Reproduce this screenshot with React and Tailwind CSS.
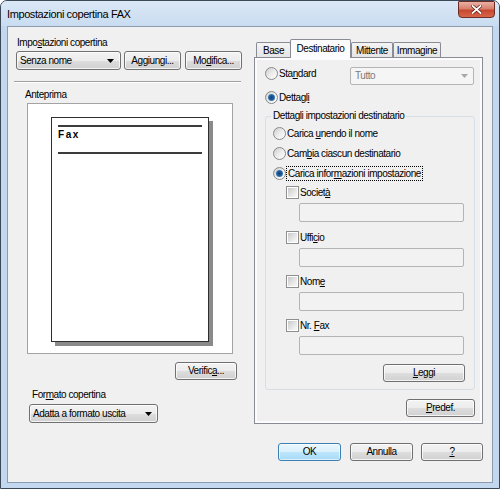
import React from "react";

const U = ({ children }) => (
  <span className="underline decoration-[1px] underline-offset-[1px]">{children}</span>
);

const T = "text-[10px] leading-[12px] tracking-[-0.45px] text-black whitespace-nowrap";

const BTN =
  "flex items-center justify-center rounded-[3px] border border-[#707070] bg-[linear-gradient(to_bottom,#f3f3f3_0%,#ececec_50%,#dedede_50%,#d0d0d0_100%)] shadow-[inset_0_0_0_1px_rgba(255,255,255,0.75)]";
const BTN_DEF =
  "flex items-center justify-center rounded-[3px] border border-[#3c7fb1] bg-[linear-gradient(to_bottom,#eaf6fd_0%,#d9f0fc_50%,#bee6fd_50%,#a7d9f5_100%)] shadow-[inset_0_0_0_1px_rgba(255,255,255,0.6)]";

function Arrow({ color = "#000" }) {
  return (
    <svg width="7" height="4" viewBox="0 0 7 4">
      <polygon points="0,0 7,0 3.5,4" fill={color} />
    </svg>
  );
}

function Radio({ on }) {
  return (
    <div className="w-[13px] h-[13px] shrink-0 rounded-full border border-[#8a8a8a] bg-[linear-gradient(135deg,#cdcdcd_0%,#ececec_50%,#ffffff_100%)] flex items-center justify-center">
      {on && (
        <div className="w-[7px] h-[7px] rounded-full bg-[radial-gradient(circle_at_50%_50%,#123f73_0%,#2765a3_55%,#86bde6_100%)]" />
      )}
    </div>
  );
}

function Check() {
  return (
    <div className="w-[13px] h-[13px] shrink-0 border border-[#8e8f8f] bg-white p-[1px]">
      <div className="w-full h-full bg-[linear-gradient(135deg,#c9c9c9_0%,#e8e8e8_60%,#f8f8f8_100%)]" />
    </div>
  );
}

function TextBox() {
  return (
    <div className="ml-[33px] w-[165px] h-[19px] rounded-[2px] border border-[#b4b4b4] bg-[#f2f2f2]" />
  );
}

export default function App() {
  return (
    <div className="w-[500px] h-[489px] bg-white font-['Liberation_Sans',Arial,sans-serif]">
      <div className="w-[500px] h-[489px] flex flex-col border border-[#3a4858] rounded-t-[7px] bg-[#c3d8ee] overflow-hidden">
        {/* Title bar */}
        <div className="h-[25px] shrink-0 flex items-start justify-between bg-[linear-gradient(to_bottom,#dbe8f6,#c9dcf0)]">
          <div className="pl-[6px] pt-[6px] text-[11px] leading-[14px] tracking-[-0.4px] text-black whitespace-nowrap">
            Impostazioni copertina FAX
          </div>
          <div className="mr-[4px] w-[37px] h-[17px] rounded-b-[4px] rounded-t-[1px] border border-[#6e2c24] bg-[linear-gradient(to_bottom,#eab1a4_0%,#d8806c_45%,#c5472f_55%,#d7654a_100%)] flex items-center justify-center">
            <svg width="11" height="9" viewBox="0 0 11 9">
              <path d="M1.5 1 L9.5 8 M9.5 1 L1.5 8" stroke="#5a1d16" strokeWidth="3.2" strokeLinecap="square" />
              <path d="M1.5 1 L9.5 8 M9.5 1 L1.5 8" stroke="#ffffff" strokeWidth="1.8" strokeLinecap="square" />
            </svg>
          </div>
        </div>

        {/* Client area */}
        <div className="mx-[6px] h-[457px] shrink-0 border border-[#8b9bb0] bg-[#f0f0f0] flex flex-col">
          <div className="flex h-[397px]">
            {/* Left column */}
            <div className="w-[246px] shrink-0 flex flex-col">
              <div className={`${T} mt-[10px] ml-[9px]`}>
                Impo<U>s</U>tazioni copertina
              </div>
              <div className="mt-[2px] flex">
                <div className={`${BTN} ml-[8px] w-[105px] h-[19px] !justify-between pl-[3px] pr-[6px]`}>
                  <span className={T}>Senza nome</span>
                  <Arrow />
                </div>
                <div className={`${BTN} ml-[3px] w-[57px] h-[19px]`}>
                  <span className={T}>
                    A<U>g</U>giungi...
                  </span>
                </div>
                <div className={`${BTN} ml-[4px] w-[57px] h-[19px]`}>
                  <span className={T}>
                    Mo<U>d</U>ifica...
                  </span>
                </div>
              </div>
              <div className="mt-[11px] ml-[6px] w-[227px] h-[2px] border-t border-[#a0a0a0] border-b border-b-white" />
              <div className={`${T} mt-[6px] ml-[17px]`}>Anteprima</div>
              <div className="mt-[2px] ml-[19px] w-[206px] h-[251px] border border-[#a3a3a3] bg-white">
                <div className="mt-[13px] ml-[23px] w-[158px] h-[225px] border border-[#2e2e2e] bg-white shadow-[4px_4px_0_0_#8a8a8a] flex flex-col">
                  <div className="mt-[7px] ml-[6px] w-[144px] h-[2px] bg-[#3c3c3c]" />
                  <div className="mt-[1px] ml-[6px] text-[10px] leading-[13px] font-bold tracking-[1.6px] text-black">
                    Fax
                  </div>
                  <div className="mt-[11px] ml-[6px] w-[144px] h-[2px] bg-[#3c3c3c]" />
                </div>
              </div>
              <div className={`${BTN} mt-[8px] ml-[167px] w-[62px] h-[18px]`}>
                <span className={T}>
                  Verific<U>a</U>...
                </span>
              </div>
              <div className={`${T} mt-[9px] ml-[24px]`}>
                For<U>m</U>ato copertina
              </div>
              <div className={`${BTN} mt-[3px] ml-[21px] w-[129px] h-[19px] !justify-between pl-[3px] pr-[5px]`}>
                <span className={T}>Adatta a formato uscita</span>
                <Arrow />
              </div>
            </div>

            {/* Right column */}
            <div className="w-[229px] shrink-0 flex flex-col">
              {/* Tabs */}
              <div className="mt-[12px] h-[19px] flex items-end pl-[2px]">
                <div className="w-[35px] h-[16px] border border-b-0 border-[#898c95] rounded-t-[2px] bg-[linear-gradient(to_bottom,#f4f4f4,#e4e4e4)] flex items-start justify-center pt-[2px]">
                  <span className={T}>Base</span>
                </div>
                <div className="relative z-10 -ml-[1px] w-[61px] h-[19px] border border-b-0 border-[#898c95] rounded-t-[2px] bg-[#fcfcfe] flex items-start justify-center pt-[3px]">
                  <span className={T}>Destinatario</span>
                </div>
                <div className="w-[42px] h-[16px] border border-b-0 border-[#898c95] rounded-t-[2px] bg-[linear-gradient(to_bottom,#f4f4f4,#e4e4e4)] flex items-start justify-center pt-[2px]">
                  <span className={T}>Mittente</span>
                </div>
                <div className="w-[48px] h-[16px] border border-b-0 border-[#898c95] rounded-t-[2px] bg-[linear-gradient(to_bottom,#f4f4f4,#e4e4e4)] flex items-start justify-center pt-[2px]">
                  <span className={T}>Immagine</span>
                </div>
              </div>
              {/* Panel */}
              <div className="-mt-[1px] h-[367px] border border-[#898c95] bg-[#fcfcfe] p-[2px]">
                <div className="h-full bg-[#f0f0f0] flex flex-col">
                  <div className="mt-[7px] pl-[8px] flex items-start">
                    <Radio />
                    <span className={`${T} ml-[1px] leading-[13px]`}>
                      Sta<U>n</U>dard
                    </span>
                    <div className="ml-auto mr-[6px] w-[124px] h-[18px] rounded-[2px] border border-[#b5b5b5] bg-[#f5f5f5] flex items-center justify-between pl-[4px] pr-[5px]">
                      <span className={`${T} !text-[#7a7a7a]`}>Tutto</span>
                      <Arrow color="#a8a8a8" />
                    </div>
                  </div>
                  <div className="mt-[6px] pl-[8px] flex items-start">
                    <Radio on />
                    <span className={`${T} ml-[1px] leading-[13px]`}>
                      Dettagl<U>i</U>
                    </span>
                  </div>

                  {/* Group box */}
                  <div className="mt-[12px] ml-[8px] mr-[5px] h-[274px] rounded-[3px] border border-[#d5dfe5] flex flex-col">
                    <div className={`${T} -mt-[7px] ml-[5px] px-[2px] w-fit bg-[#f0f0f0]`}>
                      Dettagli impostazioni destinatario
                    </div>
                    <div className="mt-[5px] ml-[7px] flex items-center">
                      <Radio />
                      <span className={`${T} ml-[1px] leading-[13px]`}>
                        Carica <U>u</U>nendo il nome
                      </span>
                    </div>
                    <div className="mt-[7px] ml-[7px] flex items-center">
                      <Radio />
                      <span className={`${T} ml-[1px] leading-[13px]`}>
                        Cam<U>b</U>ia ciascun destinatario
                      </span>
                    </div>
                    <div className="mt-[6px] ml-[7px] flex items-center">
                      <Radio on />
                      <span className={`${T} ml-[0px] leading-[13px] border border-dotted border-black px-[1px]`}>
                        Carica infor<U>m</U>azioni impostazione
                      </span>
                    </div>

                    <div className="mt-[5px] ml-[20px] flex items-center">
                      <Check />
                      <span className={`${T} ml-[1px] leading-[13px]`}>
                        Societ<U>à</U>
                      </span>
                    </div>
                    <div className="mt-[4px]"><TextBox /></div>
                    <div className="mt-[9px] ml-[20px] flex items-center">
                      <Check />
                      <span className={`${T} ml-[1px] leading-[13px]`}>
                        Uffi<U>c</U>io
                      </span>
                    </div>
                    <div className="mt-[4px]"><TextBox /></div>
                    <div className="mt-[8px] ml-[20px] flex items-center">
                      <Check />
                      <span className={`${T} ml-[1px] leading-[13px]`}>
                        Nom<U>e</U>
                      </span>
                    </div>
                    <div className="mt-[4px]"><TextBox /></div>
                    <div className="mt-[8px] ml-[20px] flex items-center">
                      <Check />
                      <span className={`${T} ml-[1px] leading-[13px]`}>
                        Nr. <U>F</U>ax
                      </span>
                    </div>
                    <div className="mt-[4px]"><TextBox /></div>
                    <div className={`${BTN} mt-[9px] ml-[117px] w-[82px] h-[18px]`}>
                      <span className={T}>
                        <U>L</U>eggi
                      </span>
                    </div>
                  </div>

                  <div className={`${BTN} mt-[9px] self-end mr-[5px] w-[69px] h-[18px]`}>
                    <span className={T}>
                      <U>P</U>redef.
                    </span>
                  </div>
                </div>
              </div>
            </div>
          </div>

          {/* Bottom buttons */}
          <div className="mt-[19px] flex justify-end pr-[9px]">
            <div className={`${BTN_DEF} w-[63px] h-[18px]`}>
              <span className={T}>OK</span>
            </div>
            <div className={`${BTN} ml-[9px] w-[63px] h-[18px]`}>
              <span className={T}>Annulla</span>
            </div>
            <div className={`${BTN} ml-[8px] w-[62px] h-[18px]`}>
              <span className={T}>
                <U>?</U>
              </span>
            </div>
          </div>
        </div>
      </div>
    </div>
  );
}
